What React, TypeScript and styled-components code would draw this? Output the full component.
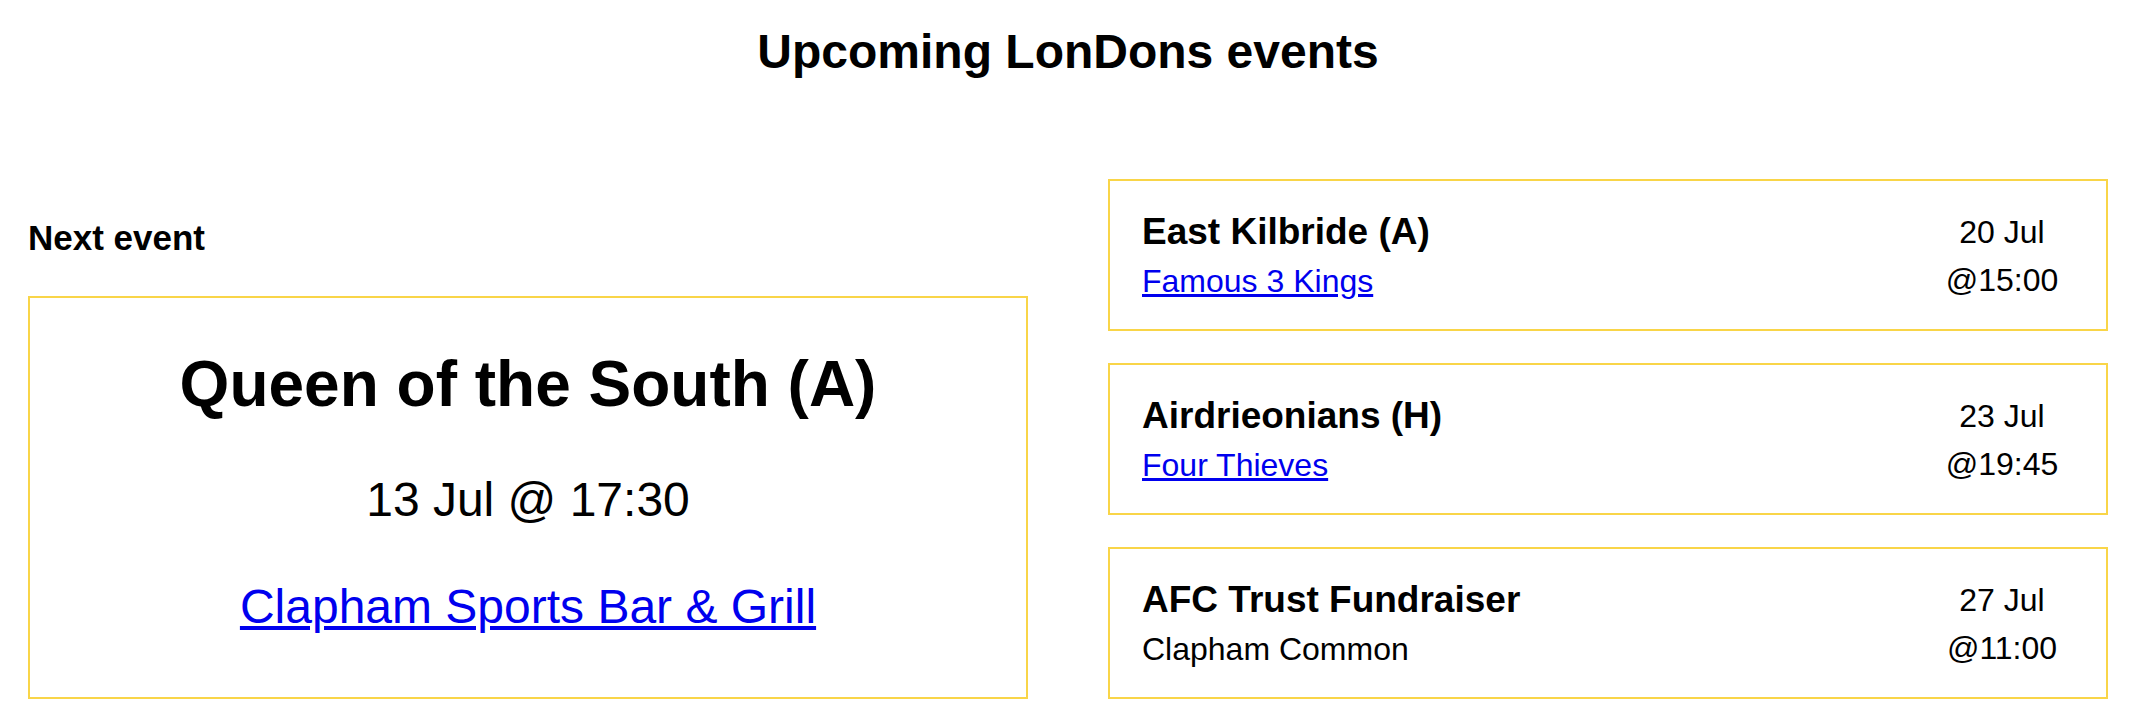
import React from "react";
import styled, { createGlobalStyle } from "styled-components";

const GlobalStyle = createGlobalStyle`
  html, body {
    margin: 0;
    padding: 0;
    background: #ffffff;
    color: #000000;
    font-family: "Liberation Sans", Arial, Helvetica, sans-serif;
  }
`;

const Page = styled.main`
  display: flex;
  flex-direction: column;
  padding: 24px 28px 0;
`;

const Title = styled.h1`
  margin: 0;
  font-size: 48px;
  line-height: 55px;
  font-weight: 700;
  text-align: center;
`;

const Columns = styled.div`
  display: grid;
  grid-template-columns: 1fr 1fr;
  column-gap: 80px;
  margin-top: 100px;
  align-items: stretch;
`;

const LeftColumn = styled.section`
  display: flex;
  flex-direction: column;
`;

const SectionHeading = styled.h2`
  margin: 39px 0 38px;
  font-size: 35px;
  line-height: 40px;
  font-weight: 700;
`;

const Card = styled.div`
  border: 2px solid #f9d548;
  background: #ffffff;
`;

const FeatureCard = styled(Card)`
  flex: 1;
  display: flex;
  flex-direction: column;
  align-items: center;
  padding: 49px 32px 0;
`;

const FeatureName = styled.h3`
  margin: 0;
  font-size: 64px;
  line-height: 74px;
  font-weight: 700;
`;

const FeatureWhen = styled.p`
  margin: 51px 0 0;
  font-size: 48px;
  line-height: 55px;
`;

const FeatureVenue = styled.p`
  margin: 52px 0 0;
  font-size: 48px;
  line-height: 55px;
`;

const VenueLink = styled.a`
  color: #0000ee;
  text-decoration: underline;
`;

const EventList = styled.section`
  display: flex;
  flex-direction: column;
  gap: 32px;
`;

const EventCard = styled(Card)`
  display: flex;
  align-items: flex-start;
  justify-content: space-between;
  padding: 30px 32px 29px;
`;

const EventInfo = styled.div`
  display: flex;
  flex-direction: column;
  gap: 10px;
`;

const EventName = styled.h4`
  margin: 0;
  font-size: 37px;
  line-height: 42px;
  font-weight: 700;
`;

const EventPlace = styled.div`
  font-size: 32px;
  line-height: 37px;
`;

const EventDate = styled.div`
  width: 144px;
  display: flex;
  flex-direction: column;
  gap: 9px;
  text-align: center;
  font-size: 32px;
`;

const DateLine = styled.div<{ $tall?: boolean }>`
  line-height: ${(p) => (p.$tall ? "42px" : "37px")};
`;

type EventItem = {
  name: string;
  place: string;
  link: boolean;
  date: string;
  time: string;
};

const events: EventItem[] = [
  { name: "East Kilbride (A)", place: "Famous 3 Kings", link: true, date: "20 Jul", time: "@15:00" },
  { name: "Airdrieonians (H)", place: "Four Thieves", link: true, date: "23 Jul", time: "@19:45" },
  { name: "AFC Trust Fundraiser", place: "Clapham Common", link: false, date: "27 Jul", time: "@11:00" },
];

export default function App() {
  return (
    <>
      <GlobalStyle />
      <Page>
        <Title>Upcoming LonDons events</Title>
        <Columns>
          <LeftColumn>
            <SectionHeading>Next event</SectionHeading>
            <FeatureCard>
              <FeatureName>Queen of the South (A)</FeatureName>
              <FeatureWhen>13 Jul @ 17:30</FeatureWhen>
              <FeatureVenue>
                <VenueLink href="#">Clapham Sports Bar &amp; Grill</VenueLink>
              </FeatureVenue>
            </FeatureCard>
          </LeftColumn>
          <EventList>
            {events.map((e) => (
              <EventCard key={e.name}>
                <EventInfo>
                  <EventName>{e.name}</EventName>
                  <EventPlace>
                    {e.link ? <VenueLink href="#">{e.place}</VenueLink> : e.place}
                  </EventPlace>
                </EventInfo>
                <EventDate>
                  <DateLine $tall>{e.date}</DateLine>
                  <DateLine>{e.time}</DateLine>
                </EventDate>
              </EventCard>
            ))}
          </EventList>
        </Columns>
      </Page>
    </>
  );
}
